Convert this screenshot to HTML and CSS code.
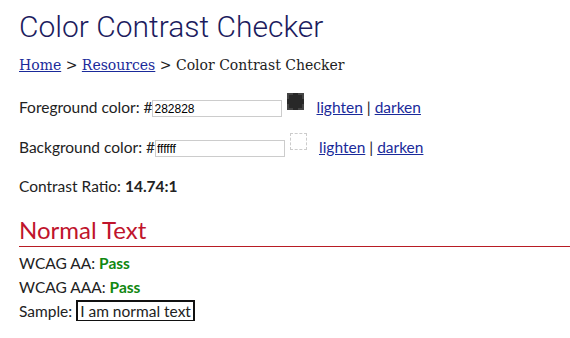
FILE: index.html
```html
<!DOCTYPE html>
<html lang="en">
<head>
    <meta charset="UTF-8">
    <title>Color Contrast Checker</title>
    <link rel="stylesheet" href="styles.css">
</head>
<body>
    <div class="container">
        <h1>Color Contrast Checker</h1>
        <p class="breadcrumb"><a href="#">Home</a> &gt; <a href="#">Resources</a> &gt; Color Contrast Checker</p>

        <div class="color-row">
            <label>Foreground color: #</label><input type="text" class="hex-input" value="282828">
            <span class="swatch swatch-fg"></span>
            <span class="adjust"><a href="#">lighten</a> | <a href="#">darken</a></span>
        </div>

        <div class="color-row row-bg">
            <label>Background color: #</label><input type="text" class="hex-input" value="ffffff">
            <span class="swatch swatch-bg"></span>
            <span class="adjust"><a href="#">lighten</a> | <a href="#">darken</a></span>
        </div>

        <p class="ratio">Contrast Ratio: <strong>14.74:1</strong></p>

        <h2>Normal Text</h2>
        <p class="result">WCAG AA: <strong class="pass">Pass</strong></p>
        <p class="result">WCAG AAA: <strong class="pass">Pass</strong></p>
        <p class="result">Sample: <span class="sample">I am normal text</span></p>
    </div>
</body>
</html>
```

FILE: styles.css
```css
* {
    margin: 0;
    padding: 0;
    box-sizing: border-box;
}

body {
    font-family: 'Lato', 'Open Sans', sans-serif;
    font-size: 15.5px;
    line-height: 20px;
    color: #222;
    background-color: #fff;
}

.container {
    padding: 9px 0 0 19px;
}

h1 {
    font-family: 'Roboto', sans-serif;
    font-weight: 300;
    font-size: 30px;
    line-height: 36px;
    color: #1c1c5e;
}

a {
    color: #1a2a9a;
}

.breadcrumb {
    font-family: 'DejaVu Serif', serif;
    font-size: 14px;
    margin-top: 10px;
    color: #222;
}

.color-row {
    display: flex;
    align-items: center;
    margin-top: 21px;
}

.row-bg {
    margin-top: 19px;
}

.hex-input {
    width: 130px;
    height: 17px;
    border: 1px solid #ccc;
    font-family: 'Liberation Sans', Arial, sans-serif;
    font-size: 12px;
    padding: 1px 1px 0;
    margin-top: 4px;
    color: #000;
}

.swatch {
    width: 17px;
    height: 17px;
    margin: -10px 0 0 5px;
    border: 1px dashed #ccc;
}

.swatch-fg {
    background-color: #282828;
    border: 2px dashed #444;
}

.adjust {
    margin-left: 12px;
}

.ratio {
    margin-top: 19px;
}

h2 {
    font-family: 'Lato', sans-serif;
    font-weight: 400;
    font-size: 24px;
    line-height: 30px;
    color: #c0142c;
    margin-top: 19px;
    border-bottom: 1px solid #b81c24;
    padding-bottom: 1px;
}

.result {
    margin-top: 6px;
}

.result + .result {
    margin-top: 4px;
}

.pass {
    color: #118811;
}

.sample {
    border: 2px solid #111;
    padding: 0 2px;
}
```
